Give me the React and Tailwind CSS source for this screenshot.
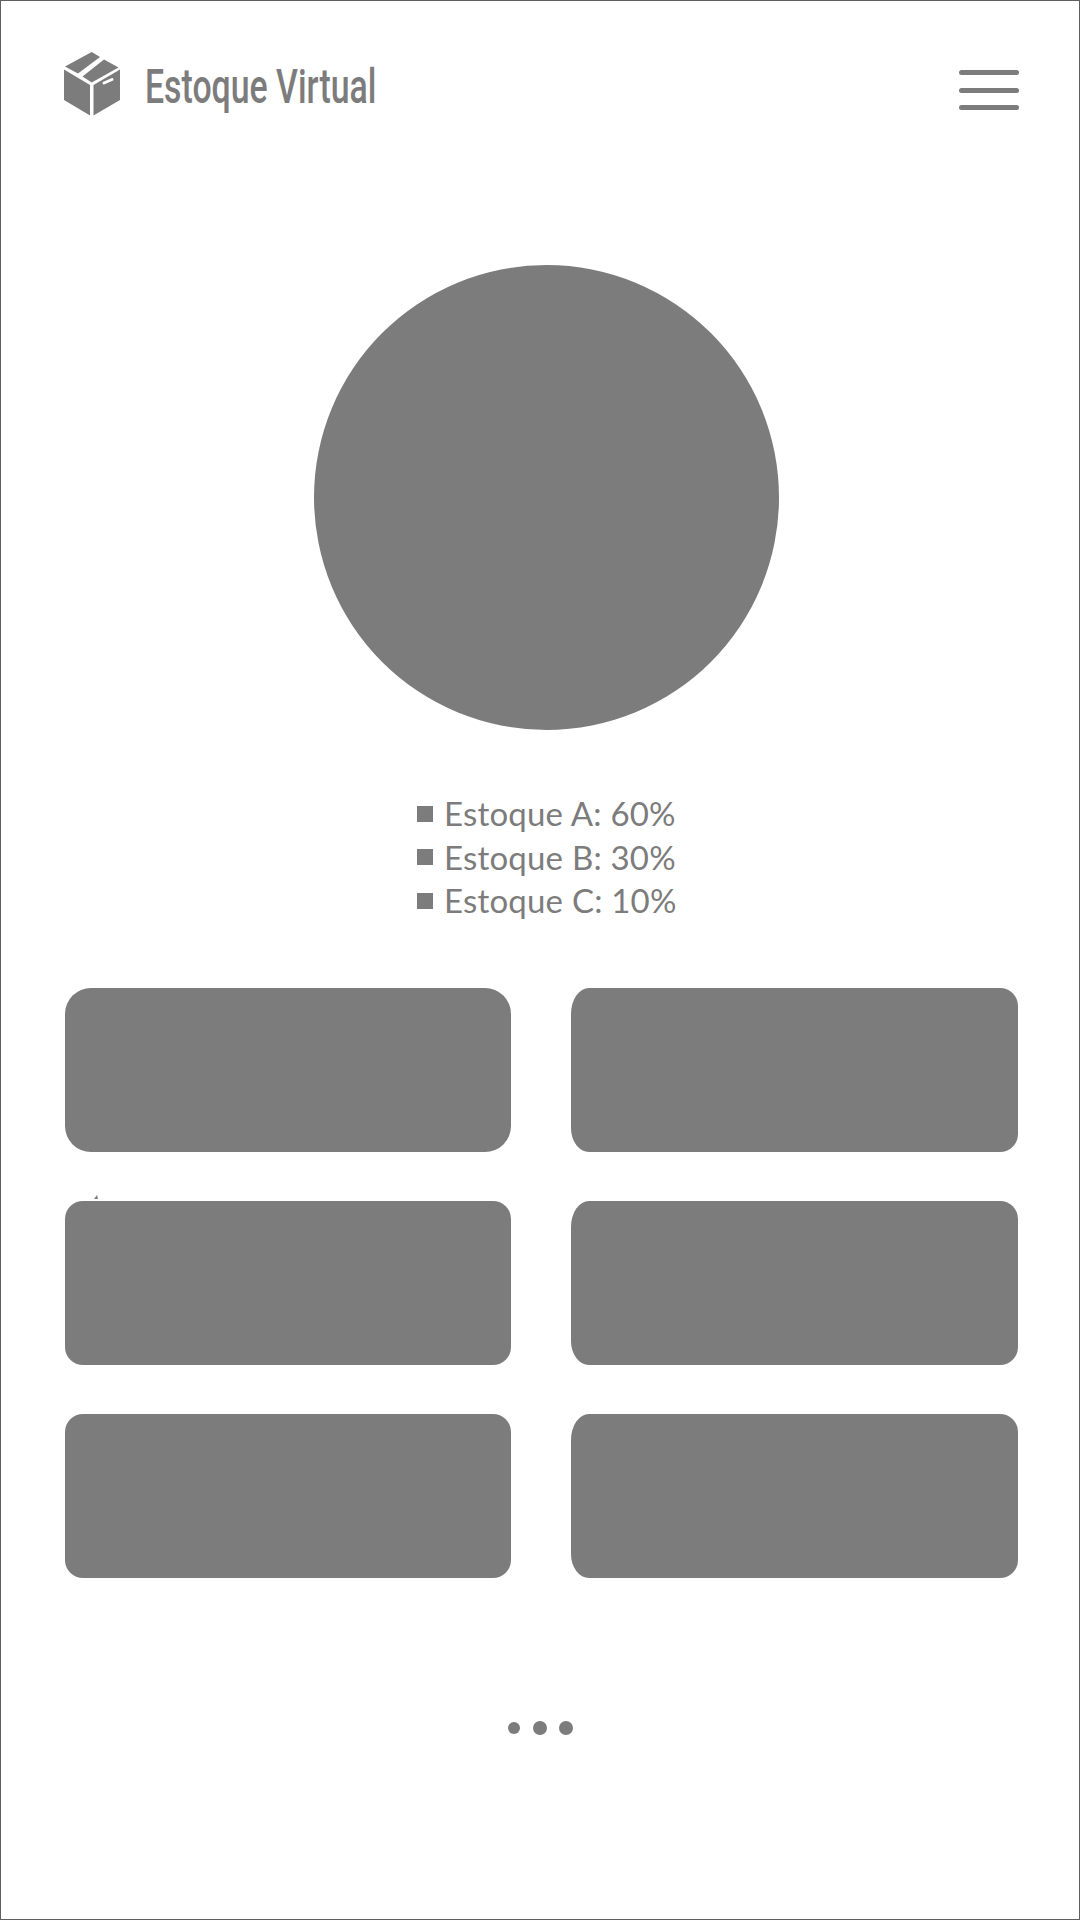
const cardBase = "relative h-[164px] bg-[#7c7c7c]";

function BoxLogo() {
  return (
    <svg width="56" height="64" viewBox="0 0 56 64" className="shrink-0">
      <path d="M27.7 0 L36 5 L14 21.5 L1 14.5 Z" fill="#7c7c7c" />
      <path d="M40 7.5 L54.5 15.5 L27.7 30.5 L18.5 24.5 Z" fill="#7c7c7c" />
      <path d="M0 17.5 L26 33 L26 63.5 L0 48 Z" fill="#7c7c7c" />
      <path d="M29.5 33 L56 17.5 L56 48 L29.5 63.5 Z" fill="#7c7c7c" />
      <path d="M40 31 L48 27.5" stroke="#ffffff" strokeWidth="3" strokeLinecap="round" />
    </svg>
  );
}

export default function App() {
  const legend = ["Estoque A: 60%", "Estoque B: 30%", "Estoque C: 10%"];
  return (
    <div className="w-[1080px] h-[1920px] bg-white border border-[#5f5f5f] flex flex-col">
      <header className="flex items-start justify-between pl-[63px] pr-[60px] pt-[51px] h-[140px]">
        <div className="flex items-center gap-[25px] h-[64px]">
          <BoxLogo />
          <span className="mt-[5px] w-[229px] whitespace-nowrap origin-left scale-x-[0.705] text-[#7c7c7c] text-[48px] font-medium leading-none font-['Roboto',sans-serif]">
            Estoque Virtual
          </span>
        </div>
        <div className="flex flex-col gap-[12.5px] w-[60px] pt-[18px]">
          <div className="h-[5px] rounded-full bg-[#7c7c7c]" />
          <div className="h-[5px] rounded-full bg-[#7c7c7c]" />
          <div className="h-[5px] rounded-full bg-[#7c7c7c]" />
        </div>
      </header>
      <div className="flex justify-center mt-[124px] pl-[13px]">
        <div className="w-[465px] h-[465px] rounded-full bg-[#7c7c7c]" />
      </div>
      <ul className="mt-[62px] flex flex-col items-start pl-[416px]">
        {legend.map((t) => (
          <li key={t} className="flex items-center gap-[11px] h-[43.5px] text-[#7c7c7c] text-[33px] tracking-[0.2px] font-['Lato',sans-serif]">
            <span className="w-[16px] h-[16px] bg-[#7c7c7c]" />
            {t}
          </li>
        ))}
      </ul>
      <div className="mt-[65px] pl-[64px] grid grid-cols-[446px_447px] gap-x-[60px] gap-y-[49px]">
        <div className={cardBase + " rounded-[26px]"} />
        <div className={cardBase + " rounded-[18px] rounded-tl-[18px_26px] rounded-bl-[18px_24px]"} />
        <div className={cardBase + " rounded-[18px]"}>
          <svg width="4" height="4" viewBox="0 0 4 4" className="absolute left-[29px] top-[-6px]">
            <path d="M0 4 L3 0 L4 4 Z" fill="#7c7c7c" />
          </svg>
        </div>
        <div className={cardBase + " rounded-[18px] rounded-tl-[18px_26px] rounded-bl-[18px_24px]"} />
        <div className={cardBase + " rounded-[18px]"} />
        <div className={cardBase + " rounded-[18px] rounded-tl-[18px_26px] rounded-bl-[18px_24px]"} />
      </div>
      <div className="mt-[143px] flex items-center justify-center gap-[12px]">
        <span className="mr-[1px] w-[12px] h-[12px] rounded-full bg-[#7c7c7c]" />
        <span className="w-[14px] h-[14px] rounded-full bg-[#7c7c7c]" />
        <span className="w-[14px] h-[14px] rounded-full bg-[#7c7c7c]" />
      </div>
    </div>
  );
}
